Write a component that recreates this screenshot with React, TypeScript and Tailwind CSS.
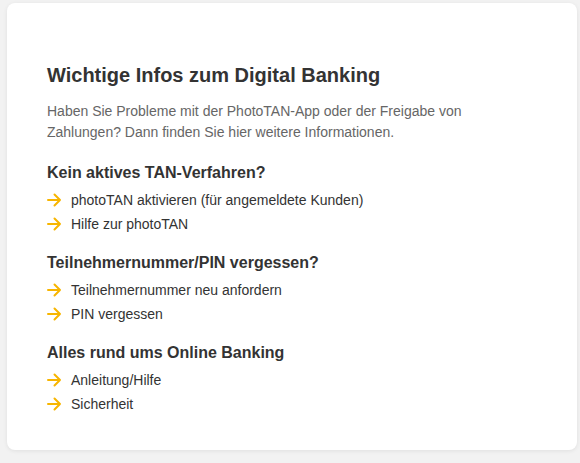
import React from 'react';

const sections = [
  {
    title: 'Kein aktives TAN-Verfahren?',
    links: ['photoTAN aktivieren (für angemeldete Kunden)', 'Hilfe zur photoTAN'],
  },
  {
    title: 'Teilnehmernummer/PIN vergessen?',
    links: ['Teilnehmernummer neu anfordern', 'PIN vergessen'],
  },
  {
    title: 'Alles rund ums Online Banking',
    links: ['Anleitung/Hilfe', 'Sicherheit'],
  },
];

function Arrow() {
  return (
    <svg width="15" height="14" viewBox="0 0 15 14" fill="none" className="shrink-0">
      <path d="M1 7h12M7.5 1.5L13 7l-5.5 5.5" stroke="#f7b500" strokeWidth="2" strokeLinecap="round" strokeLinejoin="round" />
    </svg>
  );
}

export default function App() {
  return (
    <div className="h-[463px] w-[580px] bg-[#f2f2f2] pt-[3px] pl-[7px] pr-[3px] font-['Liberation_Sans',Arial,sans-serif]">
      <div className="h-[447px] rounded-lg bg-white px-10 pt-[60px] shadow-[0_1px_4px_rgba(0,0,0,0.08)]">
        <h1 className="text-[20px] font-bold leading-6 text-[#333]">Wichtige Infos zum Digital Banking</h1>
        <p className="mt-[14px] pb-[3px] text-[14px] leading-[21px] text-[#666]">
          Haben Sie Probleme mit der PhotoTAN-App oder der Freigabe von Zahlungen? Dann finden Sie hier weitere Informationen.
        </p>

        {sections.map((s) => (
          <div key={s.title} className="mt-[17px]">
            <h2 className="text-[16px] font-bold leading-5 text-[#333]">{s.title}</h2>
            <ul className="mt-[5px]">
              {s.links.map((l) => (
                <li key={l} className="flex h-6 items-center gap-[9px] text-[14px] text-[#333]">
                  <Arrow />
                  <span>{l}</span>
                </li>
              ))}
            </ul>
          </div>
        ))}
      </div>
    </div>
  );
}
